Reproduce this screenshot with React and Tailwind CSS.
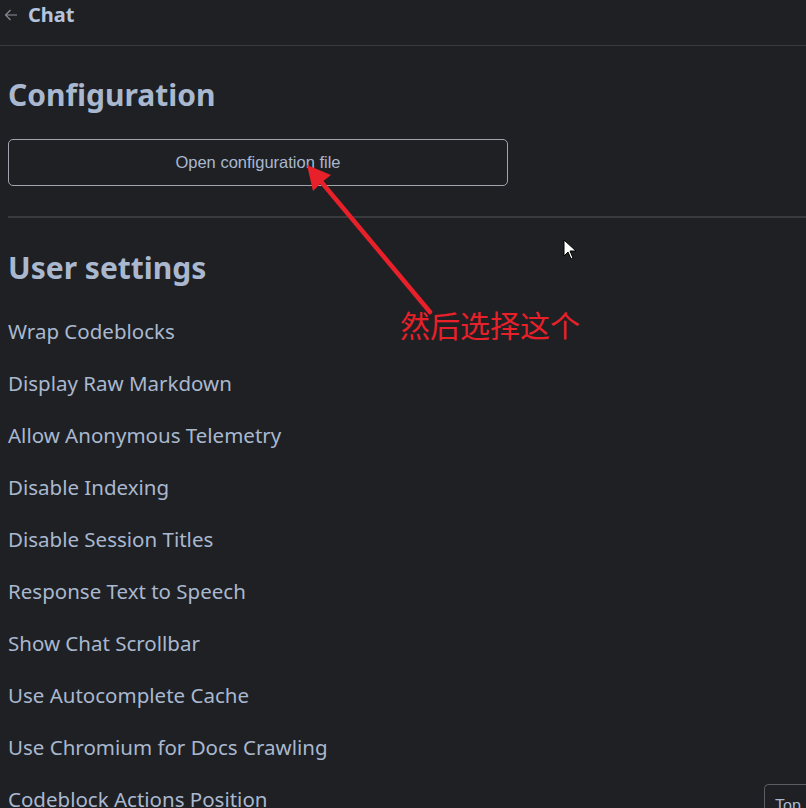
export default function App() {
  const items = [
    "Wrap Codeblocks",
    "Display Raw Markdown",
    "Allow Anonymous Telemetry",
    "Disable Indexing",
    "Disable Session Titles",
    "Response Text to Speech",
    "Show Chat Scrollbar",
    "Use Autocomplete Cache",
    "Use Chromium for Docs Crawling",
  ];

  return (
    <div
      className="relative w-[806px] h-[808px] overflow-hidden bg-[#1f2024] text-[#a9b8cf]"
      style={{ fontFamily: '"Noto Sans", "Open Sans", sans-serif' }}
    >
      {/* header */}
      <div className="flex items-center gap-[10px] h-[46px] pl-[4px] pb-[16px] border-b border-[#3a3b3f]">
        <svg width="14" height="12" viewBox="0 0 14 12" className="mt-[1px]">
          <path d="M13 6 H1.5 M6.5 1 L1.5 6 L6.5 11" fill="none" stroke="#8b8f98" strokeWidth="1.1" />
        </svg>
        <span className="text-[20px] font-bold text-[#b5c4dc]">Chat</span>
      </div>

      <div className="pl-[8px]">
        <h1 className="mt-[29px] text-[30px] leading-[40px] font-bold text-[#a9b8cf]">Configuration</h1>
        <button
          className="mt-[24px] w-[500px] h-[47px] rounded-[5px] border border-[#a0a4ad] text-[16.5px] text-[#a9b8cf]"
          style={{ fontFamily: '"Liberation Sans", Arial, sans-serif' }}
        >
          Open configuration file
        </button>
        <div className="mt-[30px] border-t-2 border-[#3a3b3f]" />

        <h2 className="mt-[30px] text-[30px] leading-[40px] font-bold text-[#a9b8cf]">User settings</h2>

        <div className="mt-[28px] flex flex-col">
          {items.map((t) => (
            <div key={t} className="h-[52px] text-[20.5px] leading-[30px]">
              {t}
            </div>
          ))}
          <div className="flex items-start justify-between h-[52px]">
            <span className="text-[20.5px] leading-[30px]">Codeblock Actions Position</span>
            <span
              className="mt-[0px] w-[42px] h-[40px] pl-[10px] pt-[9px] rounded-tl-[5px] border border-r-0 border-b-0 border-[#5a5d63] text-[16px] text-[#a9b8cf]"
              style={{ fontFamily: '"Liberation Sans", Arial, sans-serif' }}
            >
              Top
            </span>
          </div>
        </div>
      </div>

      {/* annotation arrow */}
      <svg className="absolute left-0 top-0" width="806" height="808">
        <line x1="430" y1="312" x2="318" y2="178" stroke="#e8202a" strokeWidth="4.5" strokeLinecap="round" />
        <polygon points="307,165 331,175 322,182 313,191" fill="#e8202a" />
        {/* mouse cursor */}
        <path d="M564 240 L564 256 L568 252 L571 259 L573 258 L570 251 L576 251 Z" fill="#fff" stroke="#000" strokeWidth="1" />
      </svg>
      <div
        className="absolute left-[400px] top-[304px] text-[30px] leading-[40px] text-[#e8202a]"
        style={{ fontFamily: '"Noto Sans CJK SC", sans-serif' }}
      >
        然后选择这个
      </div>
    </div>
  );
}
